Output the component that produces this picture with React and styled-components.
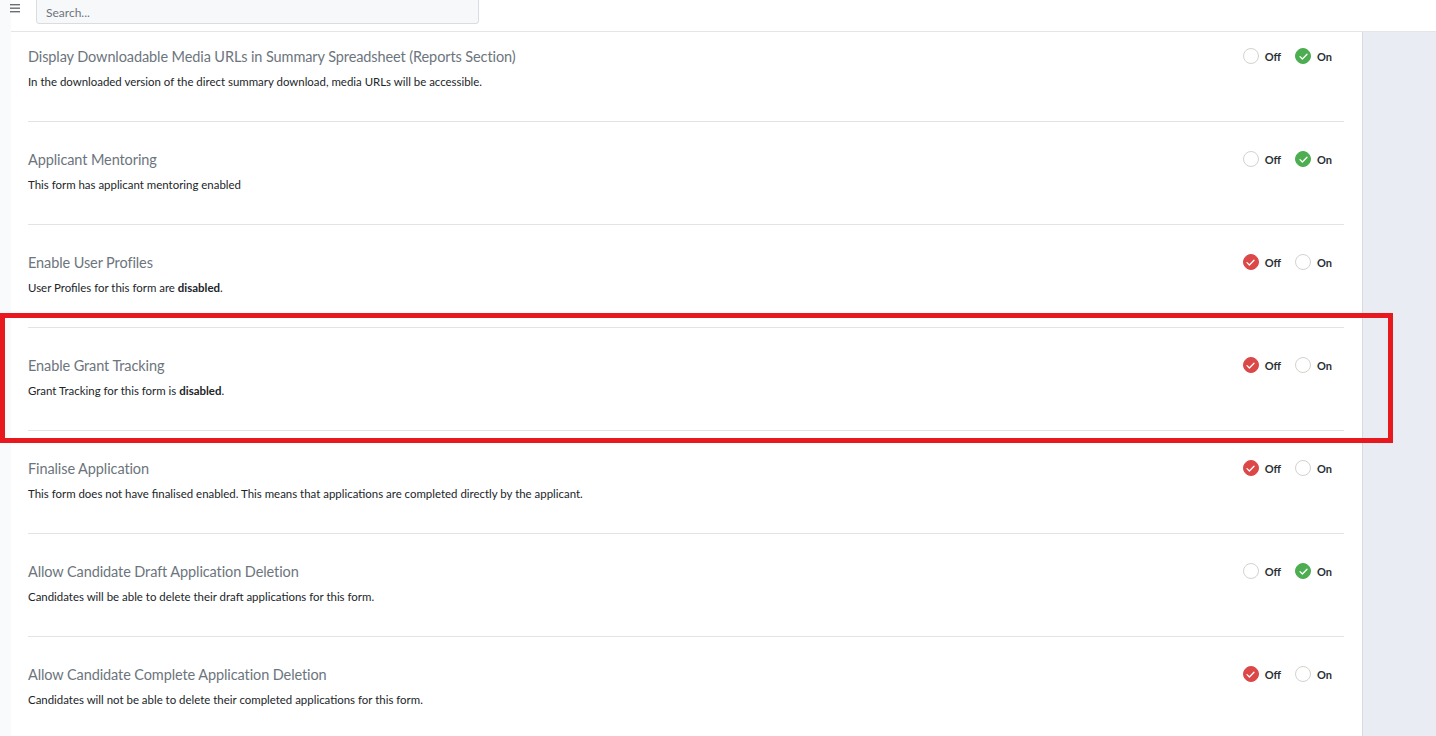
import React from "react";
import styled, { createGlobalStyle } from "styled-components";

const Global = createGlobalStyle`
  html, body { margin: 0; padding: 0; height: 100%; overflow: hidden; }
  body { font-family: Lato, "Open Sans", sans-serif; background: #ffffff; }
  #root { height: 100%; }
`;

const Shell = styled.div`
  position: relative;
  display: flex;
  height: 736px;
  width: 1436px;
  overflow: hidden;
`;

const LeftStrip = styled.div`
  width: 11px;
  flex: none;
  background: #f9fafb;
  position: relative;
`;

const Burger = styled.div`
  position: absolute;
  left: 10px;
  top: 4px;
  z-index: 2;
  display: flex;
`;

const Main = styled.div`
  flex: 1;
  display: flex;
  flex-direction: column;
  min-width: 0;
`;

const Header = styled.header`
  height: 32px;
  box-sizing: border-box;
  flex: none;
  display: flex;
  align-items: flex-end;
  padding: 0 0 7px 25px;
  border-bottom: 1px solid #e3e5e8;
  background: #fff;
  overflow: hidden;
`;

const SearchInput = styled.input`
  width: 443px;
  height: 30px;
  flex: none;
  box-sizing: border-box;
  border: 1px solid #d9dce0;
  border-radius: 3px;
  background: #f7f8fa;
  padding: 7px 9px 0;
  font-family: Lato, "Open Sans", sans-serif;
  font-size: 12px;
  color: #495057;
  outline: none;
  &::placeholder { color: #6c757d; }
`;

const Body = styled.div`
  flex: 1;
  display: flex;
  min-height: 0;
`;

const Content = styled.div`
  flex: 1;
  padding: 0 18px 0 17px;
  background: #fff;
`;

const SidePanel = styled.aside`
  width: 73px;
  flex: none;
  background: #e9ecf2;
  border-left: 1px solid #d6dae1;
`;

const Row = styled.div`
  display: flex;
  justify-content: space-between;
  align-items: flex-start;
  padding: 28px 0 30px;
  border-top: 1px solid #e2e3e5;
  &:first-child {
    border-top: none;
    padding-top: 15px;
  }
`;

const Text = styled.div`
  display: flex;
  flex-direction: column;
  gap: 6px;
`;

const Title = styled.div`
  font-size: 14.5px;
  line-height: 20px;
  color: #6c757d;
  letter-spacing: -0.1px;
`;

const Desc = styled.div`
  font-size: 11.45px;
  line-height: 18px;
  color: #212529;
  b { font-weight: 700; }
`;

const Options = styled.div`
  display: flex;
  align-items: center;
  gap: 14px;
  height: 18px;
  padding-right: 12px;
`;

const Option = styled.label`
  display: flex;
  align-items: center;
  gap: 6px;
  font-size: 11px;
  font-weight: 700;
  color: #2b2f33;
`;

const Circle = styled.span`
  width: 16px;
  height: 16px;
  box-sizing: border-box;
  border-radius: 50%;
  display: flex;
  align-items: center;
  justify-content: center;
  background: ${(p) => (p.$checked ? p.$color : "#fff")};
  border: 1px solid ${(p) => (p.$checked ? p.$color : "#d5d2cc")};
`;

const Highlight = styled.div`
  position: absolute;
  left: 0;
  top: 313px;
  width: 1393px;
  height: 130px;
  box-sizing: border-box;
  border: 5px solid #e8191e;
  pointer-events: none;
`;

const Check = () => (
  <svg width="9" height="7" viewBox="0 0 9 7" fill="none">
    <path d="M1 3.6 L3.4 6 L8 1.2" stroke="#fff" strokeWidth="1.3" strokeLinecap="round" strokeLinejoin="round" />
  </svg>
);

const Radio = ({ label, checked, color }) => (
  <Option>
    <Circle $checked={checked} $color={color}>{checked && <Check />}</Circle>
    {label}
  </Option>
);

const GREEN = "#4cae50";
const RED = "#dc4848";

const rows = [
  {
    title: "Display Downloadable Media URLs in Summary Spreadsheet (Reports Section)",
    desc: <>In the downloaded version of the direct summary download, media URLs will be accessible.</>,
    on: true,
  },
  { title: "Applicant Mentoring", desc: <>This form has applicant mentoring enabled</>, on: true },
  { title: "Enable User Profiles", desc: <>User Profiles for this form are <b>disabled</b>.</>, on: false },
  { title: "Enable Grant Tracking", desc: <>Grant Tracking for this form is <b>disabled</b>.</>, on: false },
  {
    title: "Finalise Application",
    desc: <>This form does not have finalised enabled. This means that applications are completed directly by the applicant.</>,
    on: false,
  },
  {
    title: "Allow Candidate Draft Application Deletion",
    desc: <>Candidates will be able to delete their draft applications for this form.</>,
    on: true,
  },
  {
    title: "Allow Candidate Complete Application Deletion",
    desc: <>Candidates will not be able to delete their completed applications for this form.</>,
    on: false,
  },
];

export default function App() {
  return (
    <>
      <Global />
      <Shell>
        <LeftStrip>
          <Burger>
            <svg width="10" height="9" viewBox="0 0 10 9">
              <rect x="0" y="0" width="10" height="1.4" fill="#6b6f74" />
              <rect x="0" y="3.5" width="10" height="1.4" fill="#6b6f74" />
              <rect x="0" y="7" width="10" height="1.4" fill="#6b6f74" />
            </svg>
          </Burger>
        </LeftStrip>
        <Main>
          <Header>
            <SearchInput placeholder="Search..." />
          </Header>
          <Body>
            <Content>
              {rows.map((r) => (
                <Row key={r.title}>
                  <Text>
                    <Title>{r.title}</Title>
                    <Desc>{r.desc}</Desc>
                  </Text>
                  <Options>
                    <Radio label="Off" checked={!r.on} color={RED} />
                    <Radio label="On" checked={r.on} color={GREEN} />
                  </Options>
                </Row>
              ))}
            </Content>
            <SidePanel />
          </Body>
        </Main>
        <Highlight />
      </Shell>
    </>
  );
}
